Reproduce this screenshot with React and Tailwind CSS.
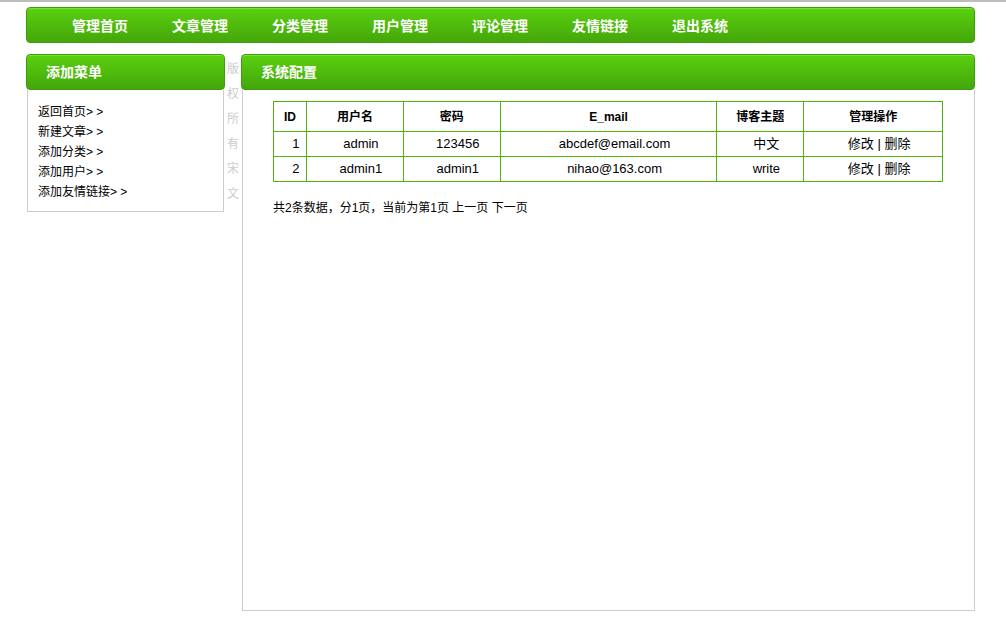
import React from 'react';

const navItems = ['管理首页', '文章管理', '分类管理', '用户管理', '评论管理', '友情链接', '退出系统'];
const menuItems = ['返回首页', '新建文章', '添加分类', '添加用户', '添加友情链接'];
const users = [
  { id: 1, name: 'admin', pwd: '123456', email: 'abcdef@email.com', theme: '中文' },
  { id: 2, name: 'admin1', pwd: 'admin1', email: 'nihao@163.com', theme: 'write' },
];

const font = { fontFamily: '"Liberation Sans", "Noto Sans CJK SC", sans-serif' };

function GreenBar({ children, className = '' }) {
  return (
    <div
      className={`h-[36px] flex items-center rounded-[4px] border border-[#3f9c0a] bg-gradient-to-b from-[#5ad10f] to-[#44a60a] shadow-[inset_0_1px_0_#7ee03a] text-white font-bold text-[14px] ${className}`}
    >
      {children}
    </div>
  );
}

export default function App() {
  return (
    <div className="w-[1006px] h-[630px] bg-white text-black" style={font}>
      <div className="h-[3px] border-t-[2px] border-[#bdbdbd]" />

      <div className="ml-[26px] w-[949px] mt-[4px]">
        {/* top nav */}
        <GreenBar className="pl-[45px] pt-[2px]">
          {navItems.map((item) => (
            <div key={item} className="w-[100px] leading-[20px]">{item}</div>
          ))}
        </GreenBar>

        <div className="flex mt-[11px]">
          {/* left menu */}
          <div className="w-[199px]">
            <GreenBar className="pl-[19px] pt-[1px]">添加菜单</GreenBar>
            <div className="mx-[1px] border border-t-0 border-[#cccccc] pl-[10px] pt-[12px] pb-[9px] text-[12px] leading-[20px]">
              {menuItems.map((item) => (
                <div key={item}>{item}&gt; &gt;</div>
              ))}
            </div>
          </div>

          {/* copyright column */}
          <div className="w-[16px] pt-[3px] text-center text-[12px] leading-[25px] text-[#cccccc]">
            {'版权所有宋文'.split('').map((c, i) => (
              <div key={i}>{c}</div>
            ))}
          </div>

          {/* main content */}
          <div className="w-[734px]">
            <GreenBar className="pl-[19px] pt-[1px]">系统配置</GreenBar>
            <div className="ml-[1px] h-[521px] border border-t-0 border-[#cccccc] pl-[30px] pt-[11px]">
              <table className="w-[670px] border-collapse text-[13px]">
                <thead>
                  <tr className="h-[30px] text-[12px] font-bold">
                    <th className="w-[33px] border border-[#4fb40c]">ID</th>
                    <th className="w-[97px] border border-[#4fb40c]">用户名</th>
                    <th className="w-[97px] border border-[#4fb40c]">密码</th>
                    <th className="w-[217px] border border-[#4fb40c]">E_mail</th>
                    <th className="w-[87px] border border-[#4fb40c]">博客主题</th>
                    <th className="w-[139px] border border-[#4fb40c]">管理操作</th>
                  </tr>
                </thead>
                <tbody>
                  {users.map((u) => (
                    <tr key={u.id} className="h-[25px]">
                      <td className="border border-[#4fb40c] pl-[12px] text-center">{u.id}</td>
                      <td className="border border-[#4fb40c] pl-[12px] text-center">{u.name}</td>
                      <td className="border border-[#4fb40c] pl-[12px] text-center">{u.pwd}</td>
                      <td className="border border-[#4fb40c] pl-[12px] text-center">{u.email}</td>
                      <td className="border border-[#4fb40c] pl-[12px] text-center">{u.theme}</td>
                      <td className="border border-[#4fb40c] pl-[12px] text-center">修改 | 删除</td>
                    </tr>
                  ))}
                </tbody>
              </table>
              <div className="mt-[18px] text-[12px] leading-[16px]">
                共2条数据，分1页，当前为第1页 上一页 下一页
              </div>
            </div>
          </div>
        </div>
      </div>
    </div>
  );
}
